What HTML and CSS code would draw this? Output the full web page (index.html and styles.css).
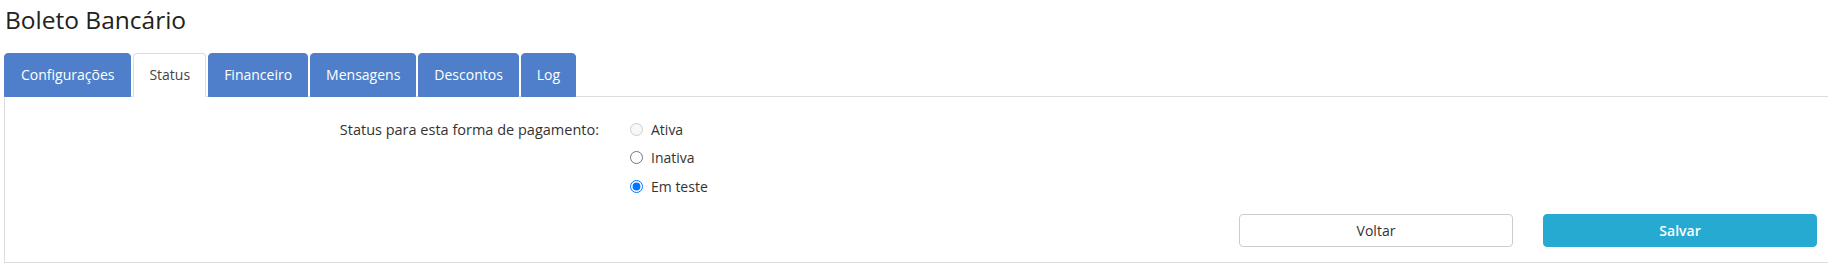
FILE: index.html
```html
<!DOCTYPE html>
<html lang="pt-BR">

<head>
    <meta charset="UTF-8">
    <meta name="viewport" content="width=device-width, initial-scale=1.0">
    <title>Boleto Bancário</title>
    <link rel="stylesheet" href="styles.css">
</head>

<body>
    <h1 class="page-title">Boleto Bancário</h1>

    <ul class="tabs">
        <li class="tab">Configurações</li>
        <li class="tab active">Status</li>
        <li class="tab">Financeiro</li>
        <li class="tab">Mensagens</li>
        <li class="tab">Descontos</li>
        <li class="tab">Log</li>
    </ul>

    <div class="panel">
        <form class="status-form">
            <div class="form-row">
                <label class="form-label">Status para esta forma de pagamento:</label>
                <div class="radio-list">
                    <label class="radio-item">
                        <input type="radio" name="status" value="ativa" disabled>
                        <span>Ativa</span>
                    </label>
                    <label class="radio-item">
                        <input type="radio" name="status" value="inativa">
                        <span>Inativa</span>
                    </label>
                    <label class="radio-item">
                        <input type="radio" name="status" value="teste" checked>
                        <span>Em teste</span>
                    </label>
                </div>
            </div>

            <div class="actions">
                <button type="button" class="btn btn-back">Voltar</button>
                <button type="submit" class="btn btn-save">Salvar</button>
            </div>
        </form>
    </div>
</body>

</html>
```

FILE: styles.css
```css
body {
    font-family: "Open Sans", Arial, sans-serif;
    font-size: 14px;
    color: #333;
    margin: 0;
    overflow: hidden;
    background-color: #fff;
}

.page-title {
    margin: 7px 0 20px 5px;
    font-size: 24.5px;
    line-height: 26px;
    font-weight: 400;
    color: #222;
}

.tabs {
    display: flex;
    gap: 2px;
    list-style: none;
    margin: 0 0 -1px 4px;
    padding: 0;
    position: relative;
}

.tab {
    padding: 12px 15px;
    line-height: 18px;
    background-color: #4f7fca;
    color: #fff;
    border: 1px solid #4f7fca;
    border-radius: 4px 4px 0 0;
}

.tab:first-child {
    padding: 12px 16px;
}

.tab.active {
    background-color: #fff;
    color: #444;
    border-color: #ddd #ddd #fff;
}

.panel {
    margin-left: 4px;
    border: 1px solid #ddd;
    border-right: none;
    border-bottom: 2px solid #ddd;
    padding: 18px 0 15px;
}

.form-row {
    display: flex;
    align-items: flex-start;
}

.form-label {
    width: 594px;
    text-align: right;
    font-size: 14.5px;
    line-height: 29px;
    margin-right: 31px;
}

.radio-list {
    display: flex;
    flex-direction: column;
}

.radio-item {
    display: flex;
    align-items: center;
    height: 28.5px;
    gap: 8px;
}

.radio-item input {
    margin: 0;
    width: 13px;
    height: 13px;
}

.actions {
    display: flex;
    justify-content: flex-end;
    gap: 30px;
    margin-top: 13px;
    padding-right: 11px;
}

.btn {
    width: 274px;
    height: 33px;
    font-family: "Open Sans", Arial, sans-serif;
    font-size: 14px;
    border-radius: 4px;
    cursor: pointer;
}

.btn-back {
    background-color: #fff;
    border: 1px solid #ccc;
    color: #333;
}

.btn-save {
    background-color: #26aad2;
    border: 1px solid #26aad2;
    color: #fff;
    font-weight: 600;
}
```
